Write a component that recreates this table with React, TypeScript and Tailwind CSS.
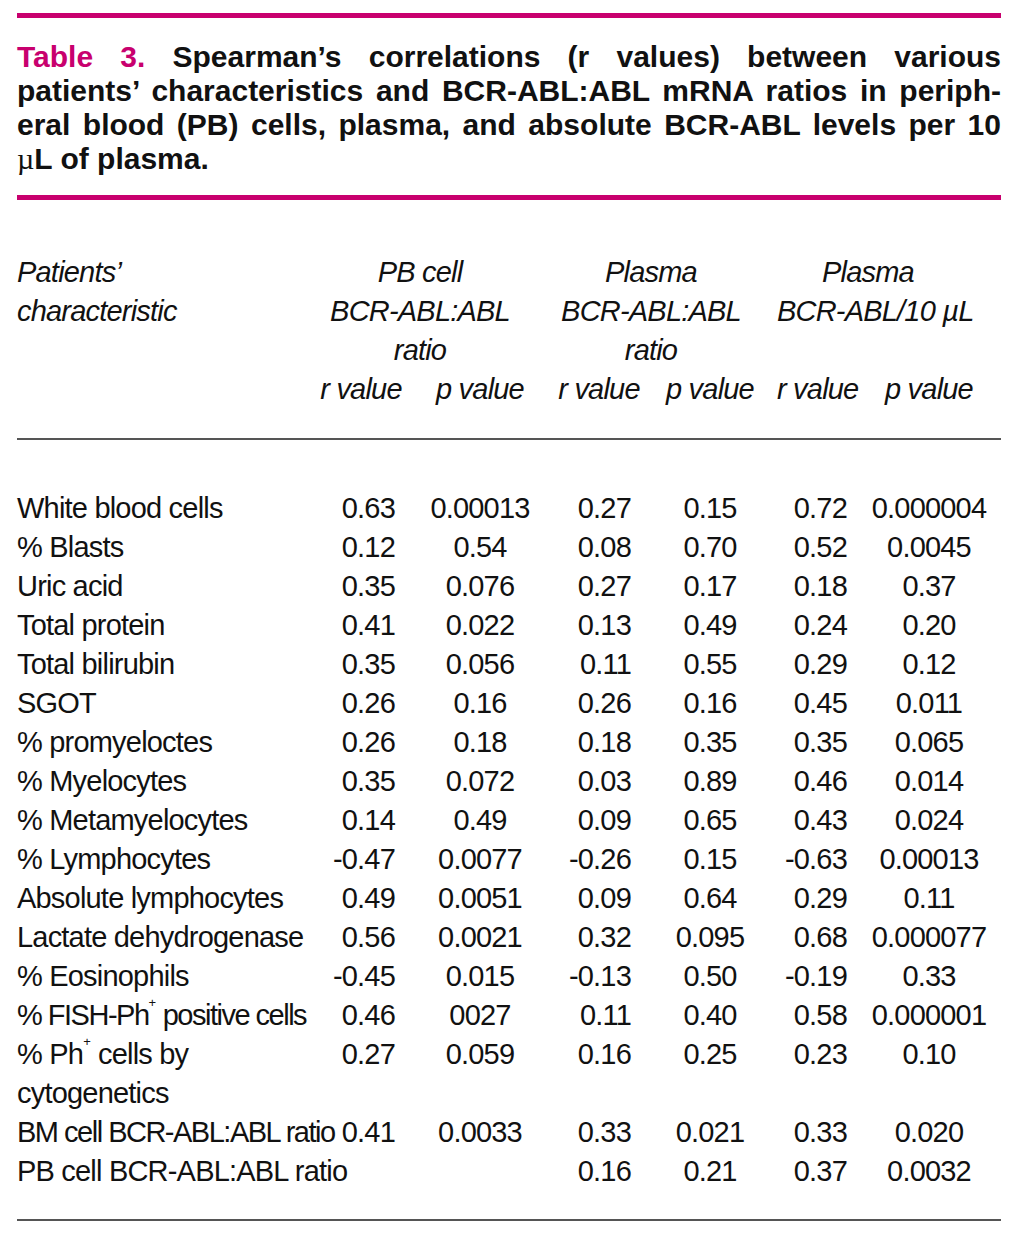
const rows: { label: React.ReactNode; v: string[]; tight?: boolean }[] = [
  { label: 'White blood cells', v: ['0.63', '0.00013', '0.27', '0.15', '0.72', '0.000004'] },
  { label: '% Blasts', v: ['0.12', '0.54', '0.08', '0.70', '0.52', '0.0045'] },
  { label: 'Uric acid', v: ['0.35', '0.076', '0.27', '0.17', '0.18', '0.37'] },
  { label: 'Total protein', v: ['0.41', '0.022', '0.13', '0.49', '0.24', '0.20'] },
  { label: 'Total bilirubin', v: ['0.35', '0.056', '0.11', '0.55', '0.29', '0.12'] },
  { label: 'SGOT', v: ['0.26', '0.16', '0.26', '0.16', '0.45', '0.011'] },
  { label: '% promyeloctes', v: ['0.26', '0.18', '0.18', '0.35', '0.35', '0.065'] },
  { label: '% Myelocytes', v: ['0.35', '0.072', '0.03', '0.89', '0.46', '0.014'] },
  { label: '% Metamyelocytes', v: ['0.14', '0.49', '0.09', '0.65', '0.43', '0.024'] },
  { label: '% Lymphocytes', v: ['-0.47', '0.0077', '-0.26', '0.15', '-0.63', '0.00013'] },
  { label: 'Absolute lymphocytes', v: ['0.49', '0.0051', '0.09', '0.64', '0.29', '0.11'] },
  { label: 'Lactate dehydrogenase', v: ['0.56', '0.0021', '0.32', '0.095', '0.68', '0.000077'] },
  { label: '% Eosinophils', v: ['-0.45', '0.015', '-0.13', '0.50', '-0.19', '0.33'] },
  {
    label: (
      <>
        % FISH-Ph<Plus /> positive cells
      </>
    ),
    v: ['0.46', '0027', '0.11', '0.40', '0.58', '0.000001'],
    tight: true,
  },
  {
    label: (
      <>
        % Ph<Plus /> cells by
        <br />
        cytogenetics
      </>
    ),
    v: ['0.27', '0.059', '0.16', '0.25', '0.23', '0.10'],
  },
  { label: 'BM cell BCR-ABL:ABL ratio', v: ['0.41', '0.0033', '0.33', '0.021', '0.33', '0.020'], tight: true },
  { label: 'PB cell BCR-ABL:ABL ratio', v: ['', '', '0.16', '0.21', '0.37', '0.0032'] },
];

function Plus() {
  return <span className="align-top text-[13px] leading-none tracking-normal">+</span>;
}

// r columns sit right, p columns are centred
const cellCls = ['text-right pr-[10px]', 'text-center', 'text-right pr-[12px]', 'text-center', 'text-right pr-[10px]', 'text-center'];

const cols = 'grid grid-cols-[300px_88px_150px_88px_134px_80px_144px]';
const narrow = "font-['Liberation_Sans',Arial,sans-serif] text-[29px] leading-[39px] tracking-[-0.8px]";

export default function App() {
  return (
    <div className="w-[1026px] h-[1242px] bg-white pl-[17px] pr-[25px] pt-[13px] text-[#111]">
      <div className="h-[5px] bg-[#c8006e]" />

      {/* Caption */}
      <div className="mt-[22px] font-['Liberation_Sans',Arial,sans-serif] font-bold text-[30px] leading-[34px]">
        <div className="text-justify [text-align-last:justify]">
          <span className="text-[#c8006e]">Table 3.</span> Spearman’s correlations (r values) between various
        </div>
        <div className="text-justify [text-align-last:justify]">
          patients’ characteristics and BCR-ABL:ABL mRNA ratios in periph-
        </div>
        <div className="text-justify [text-align-last:justify]">
          eral blood (PB) cells, plasma, and absolute BCR-ABL levels per 10
        </div>
        <div>
          <span className="font-['Liberation_Serif',serif] font-normal">µ</span>L of plasma.
        </div>
      </div>

      <div className="mt-[19px] h-[5px] bg-[#c8006e]" />

      {/* Header */}
      <div className={`mt-[53px] ${cols} grid-rows-[39px_39px_39px_39px] italic whitespace-nowrap ${narrow}`}>
        <div className="row-span-4">
          <div>Patients’</div>
          <div>characteristic</div>
        </div>
        <div className="col-span-2 row-span-3 text-center pr-[32px]">
          <div>PB cell</div>
          <div>BCR-ABL:ABL</div>
          <div>ratio</div>
        </div>
        <div className="col-span-2 row-span-3 text-center pr-[30px]">
          <div>Plasma</div>
          <div>BCR-ABL:ABL</div>
          <div>ratio</div>
        </div>
        <div className="col-span-2 row-span-3 text-center pr-[42px]">
          <div>Plasma</div>
          <div>BCR-ABL/10 µL</div>
        </div>
        <div className="text-center">r value</div>
        <div className="text-center">p value</div>
        <div className="text-center">r value</div>
        <div className="text-center">p value</div>
        <div className="text-center">r value</div>
        <div className="text-center">p value</div>
      </div>

      <div className="mt-[29px] h-[2px] bg-[#555]" />

      {/* Body */}
      <div className={`mt-[49px] ${cols} ${narrow}`}>
        {rows.map((r, i) => (
          <div key={i} className="contents">
            <div className={`whitespace-nowrap ${r.tight ? 'tracking-[-1.5px]' : ''}`}>{r.label}</div>
            {r.v.map((v, j) => (
              <div key={j} className={`whitespace-nowrap ${cellCls[j]}`}>
                {v}
              </div>
            ))}
          </div>
        ))}
      </div>

      <div className="mt-[28px] h-[2px] bg-[#555]" />
    </div>
  );
}
